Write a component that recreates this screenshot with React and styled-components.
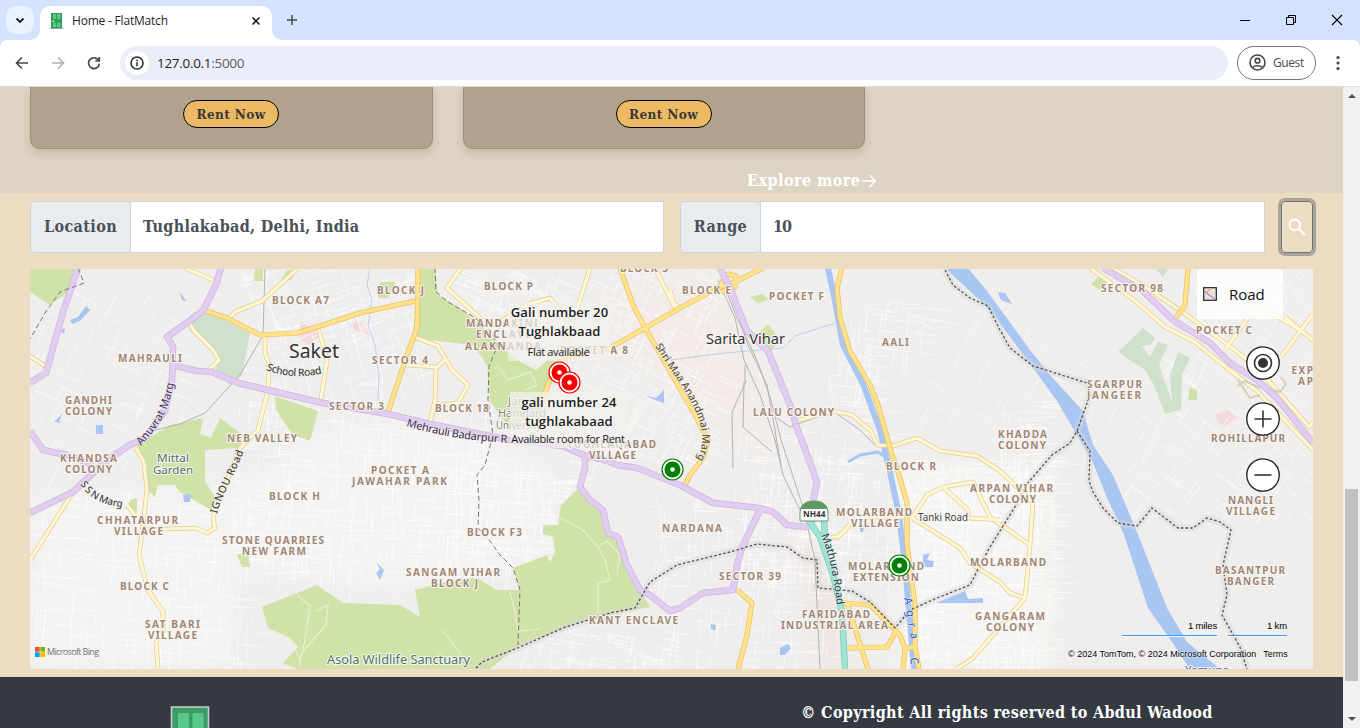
import React from "react";
import styled, { createGlobalStyle, css } from "styled-components";

const ui = '"Open Sans", "Noto Sans", sans-serif';
const display = '"DejaVu Serif Condensed", "DejaVu Serif", serif';

const Global = createGlobalStyle`
  * { box-sizing: border-box; }
  html, body { margin: 0; height: 100%; overflow: hidden; }
  body { font-family: ${ui}; }
  svg { display: block; }
`;

const Window = styled.div`
  width: 1360px;
  height: 728px;
  display: flex;
  flex-direction: column;
  overflow: hidden;
  background: #d3e3fd;
`;

/* ---------- browser chrome ---------- */
const TabStrip = styled.div`
  height: 40px;
  flex: none;
  display: flex;
  align-items: flex-end;
  padding-left: 6px;
`;
const TabSearch = styled.div`
  width: 28px;
  height: 28px;
  margin: 0 6px 6px 0;
  border-radius: 10px;
  background: #eaf1fe;
  display: grid;
  place-items: center;
`;
const Tab = styled.div`
  position: relative;
  width: 232px;
  height: 34px;
  padding: 0 9px 5px;
  border-radius: 10px 10px 0 0;
  background: #fff;
  display: flex;
  align-items: center;
  font-size: 12px;
  letter-spacing: -0.2px;
  color: #1f1f1f;
  &::before, &::after {
    content: "";
    position: absolute;
    bottom: 0;
    width: 10px;
    height: 10px;
  }
  &::before { left: -10px; background: radial-gradient(circle at 0 0, transparent 9.5px, #fff 10px); }
  &::after { right: -10px; background: radial-gradient(circle at 100% 0, transparent 9.5px, #fff 10px); }
`;
const TabTitle = styled.span`
  flex: 1;
  margin-left: 8px;
`;
const NewTab = styled.div`
  align-self: center;
  margin-left: 14px;
`;
const WindowButtons = styled.div`
  margin-left: auto;
  align-self: center;
  display: flex;
  gap: 34px;
  padding-right: 17px;
`;
const Toolbar = styled.div`
  height: 47px;
  flex: none;
  display: flex;
  align-items: center;
  padding: 0 15px 1px 15px;
  background: #fff;
  border-radius: 8px 8px 0 0;
  border-bottom: 1px solid #dadcdc;
`;
const NavIcons = styled.div`
  display: flex;
  gap: 22px;
  margin-right: 19px;
`;
const Address = styled.div`
  width: 1108px;
  height: 34px;
  padding-left: 5px;
  border-radius: 17px;
  background: #ebeef8;
  display: flex;
  align-items: center;
  gap: 8px;
  font-size: 13.5px;
  letter-spacing: -0.3px;
  color: #1f1f1f;
  span span { color: #5c5e62; }
`;
const SiteInfo = styled.div`
  width: 24px;
  height: 24px;
  border-radius: 50%;
  background: #fff;
  display: grid;
  place-items: center;
`;
const Profile = styled.div`
  width: 79px;
  height: 34px;
  margin: 0 15px 0 9px;
  border: 1px solid #74777a;
  border-radius: 17px;
  display: flex;
  align-items: center;
  padding-left: 11px;
  gap: 7px;
  font-size: 12px;
  letter-spacing: -0.4px;
  color: #474747;
`;

/* ---------- page ---------- */
const Viewport = styled.div`
  flex: 1;
  min-height: 0;
  display: flex;
`;
const Page = styled.main`
  width: 1343px;
  background: #ecdcc1;
  display: flex;
  flex-direction: column;
  font-family: ${display};
`;
const Listings = styled.section`
  height: 106px;
  flex: none;
  background: #ddd4c3;
  display: flex;
  flex-direction: column;
`;
const CardRow = styled.div`
  display: flex;
  gap: 30px;
  padding-left: 30px;
`;
const Card = styled.article`
  width: ${(p) => p.$w}px;
  height: 62px;
  padding: 13px 1px 0 0;
  display: flex;
  justify-content: center;
  align-items: flex-start;
  background: #b1a28e;
  border: 1px solid #9d8e7c;
  border-top: 0;
  border-radius: 0 0 10px 10px;
  box-shadow: 0 4px 8px rgba(90, 70, 40, 0.2);
`;
const RentButton = styled.button`
  width: 96px;
  height: 28px;
  padding: 0 0 1px;
  border: 1px solid #000;
  border-radius: 14px;
  background: #ecb964;
  color: #3a3835;
  font: bold 13.5px ${display};
  letter-spacing: 0.35px;
  white-space: nowrap;
`;
const Explore = styled.a`
  align-self: flex-start;
  margin: 20px 0 0 747px;
  display: flex;
  align-items: center;
  color: #fff;
  font-weight: bold;
  font-size: 16px;
  line-height: 24px;
  letter-spacing: ${(p) => p.$spacing}px;
`;
const SearchBar = styled.form`
  display: flex;
  gap: 16px;
  height: 52px;
  margin: 8px 30px 16px;
`;
const InputGroup = styled.div`
  width: ${(p) => p.$w}px;
  display: flex;
  color: #495057;
  font-weight: bold;
  font-size: 16px;
`;
const GroupLabel = styled.span`
  width: ${(p) => p.$w}px;
  padding-bottom: 2px;
  border: 1px solid #ced4da;
  border-radius: 4px;
  background: #e9ecef;
  display: grid;
  place-items: center;
  letter-spacing: ${(p) => p.$spacing}px;
`;
const Field = styled.span`
  flex: 1;
  margin-left: -1px;
  padding: 0 0 2px 12px;
  border: 1px solid #ced4da;
  background: #fff;
  display: flex;
  align-items: center;
  letter-spacing: ${(p) => p.$spacing}px;
`;
const SearchButton = styled.button`
  width: 32px;
  height: 52px;
  padding: 0;
  border: 1px solid #6c757d;
  border-radius: 4px;
  background: transparent;
  box-shadow: 0 0 0 3px #aba597;
  display: grid;
  place-items: center;
`;
const Footer = styled.footer`
  flex: 1;
  margin-top: 8px;
  background: #353941;
  display: flex;
  align-items: flex-start;
`;
const FooterLogo = styled.div`
  margin: 29px 0 0 170px;
`;
const Copyright = styled.p`
  margin: 24px 0 0 591px;
  color: #fff;
  font-weight: bold;
  font-size: 16px;
  line-height: 24px;
  white-space: nowrap;
  letter-spacing: 0.34px;
`;
const Scrollbar = styled.div`
  width: 17px;
  background: #f1f1f1;
  display: flex;
  flex-direction: column;
  align-items: center;
`;
const Thumb = styled.div`
  width: 13px;
  height: 192px;
  margin-top: 388px;
  margin-bottom: auto;
  background: #c1c1c1;
`;
const Arrow = styled.div`
  width: 0;
  height: 0;
  flex: none;
  border: 4px solid transparent;
  ${(p) =>
    p.$down
      ? css`border-top-color: #505050; border-bottom: 0; margin-bottom: 7px;`
      : css`border-bottom-color: #505050; border-top: 0; margin-top: 7px; margin-bottom: 3px;`}
`;

/* ---------- map ---------- */
const MapFrame = styled.section`
  position: relative;
  width: 1283px;
  height: 400px;
  flex: none;
  margin-left: 30px;
  overflow: hidden;
  font-family: ${ui};
`;
const MapType = styled.div`
  position: absolute;
  left: 1167px;
  top: 0;
  width: 86px;
  height: 50px;
  padding-left: 6px;
  display: flex;
  align-items: center;
  gap: 12px;
  background: rgba(255, 255, 255, 0.8);
  font-size: 15px;
  color: #111;
`;
const Controls = styled.div`
  position: absolute;
  left: 1216px;
  top: 77px;
  display: flex;
  flex-direction: column;
  gap: 22px;
`;
const PinPanel = styled.div`
  position: absolute;
  left: ${(p) => p.$x}px;
  top: ${(p) => p.$y}px;
  width: ${(p) => p.$w}px;
  height: ${(p) => p.$h}px;
  background: rgba(242, 241, 238, 0.7);
  color: #1a1a1a;
  text-align: center;
  white-space: nowrap;
`;
const PinTitle = styled.div`
  padding-top: 1px;
  font-size: 13px;
  font-weight: 600;
  line-height: 19px;
  letter-spacing: 0.1px;
  text-shadow: 0 0 2px #fff;
`;
const PinNote = styled.div`
  margin: ${(p) => p.$gap}px 0 0 -2px;
  font-size: 11px;
  line-height: 16px;
  letter-spacing: -0.33px;
`;
const Pin = styled.div`
  position: absolute;
  left: ${(p) => p.$x - 11.5}px;
  top: ${(p) => p.$y - 11.5}px;
`;
const Scale = styled.div`
  position: absolute;
  left: 1092px;
  top: 350px;
  display: flex;
  gap: 11px;
  font: 9.5px/13px "Liberation Sans", sans-serif;
  letter-spacing: -0.15px;
  color: #000;
`;
const ScaleBar = styled.div`
  width: ${(p) => p.$w}px;
  height: 17px;
  border-bottom: 1px solid #4598f5;
  box-shadow: 0 1px #fff;
  text-align: right;
  white-space: nowrap;
`;
const MapCredits = styled.div`
  position: absolute;
  left: 1038px;
  top: 379px;
  display: flex;
  gap: 7px;
  font: 9px/12px "Liberation Sans", sans-serif;
  color: #000;
  text-shadow: 0 0 2px #fff, 0 0 1px #fff;
  white-space: nowrap;
`;
const BingMark = styled.div`
  position: absolute;
  left: 5px;
  top: 376px;
  display: flex;
  align-items: center;
  gap: 2px;
  font-size: 9px;
  letter-spacing: -0.65px;
  color: #737373;
  white-space: nowrap;
`;

/* x, baseline, width, text */
const AREAS = [
  [272, 304, 57, "BLOCK A7"], [377, 294, 47, "BLOCK J"], [484, 290, 49, "BLOCK P"],
  [466, 327, 72, "MANDAKINI"], [476, 338, 55, "ENCLAVE"], [465, 350, 76, "ALAKNANDA"],
  [372, 364, 56, "SECTOR 4"], [329, 410, 55, "SECTOR 3"], [435, 412, 54, "BLOCK 18"],
  [118, 362, 64, "MAHRAULI"], [65, 404, 47, "GANDHI"], [65, 415, 47, "COLONY"],
  [60, 462, 57, "KHANDSA"], [65, 473, 47, "COLONY"], [227, 442, 70, "NEB VALLEY"],
  [371, 474, 58, "POCKET A"], [352, 485, 95, "JAWAHAR PARK"], [269, 500, 51, "BLOCK H"],
  [97, 524, 81, "CHHATARPUR"], [114, 535, 49, "VILLAGE"], [222, 544, 102, "STONE QUARRIES"],
  [242, 555, 64, "NEW FARM"], [120, 590, 49, "BLOCK C"], [145, 628, 55, "SAT BARI"],
  [148, 639, 49, "VILLAGE"], [467, 536, 55, "BLOCK F3"], [406, 576, 94, "SANGAM VIHAR"],
  [431, 587, 47, "BLOCK J"], [589, 624, 89, "KANT ENCLAVE"], [662, 532, 60, "NARDANA"],
  [719, 580, 62, "SECTOR 39"], [753, 416, 81, "LALU COLONY"], [682, 294, 49, "BLOCK E"],
  [769, 300, 55, "POCKET F"], [882, 346, 27, "AALI"], [886, 470, 50, "BLOCK R"],
  [836, 516, 76, "MOLARBAND"], [851, 527, 48, "VILLAGE"], [848, 570, 76, "MOLARBAND"],
  [853, 581, 66, "EXTENSION"], [802, 618, 68, "FARIDABAD"], [781, 629, 107, "INDUSTRIAL AREA"],
  [970, 492, 83, "ARPAN VIHAR"], [989, 503, 47, "COLONY"], [998, 438, 49, "KHADDA"],
  [998, 449, 48, "COLONY"], [970, 566, 76, "MOLARBAND"], [975, 620, 70, "GANGARAM"],
  [986, 631, 48, "COLONY"], [1087, 388, 55, "SGARPUR"], [1087, 399, 54, "JANGEER"],
  [1101, 292, 62, "SECTOR 98"], [1196, 334, 56, "POCKET C"], [1291.5, 374, 21.5, "EXP"],
  [1298, 385, 15, "AP"], [1211, 442, 74, "ROHILLAPUR"], [1228, 504, 45, "NANGLI"],
  [1226, 515, 49, "VILLAGE"], [1215, 574, 70, "BASANTPUR"], [1227, 585, 47, "BANGER"],
  [620, 272, 48, "BLOCK 5"], [560, 354, 68, "POCKET A 8"], [567, 448, 89, "TUGHLAQABAD"],
  [589, 459, 47, "VILLAGE"],
];

/* x, baseline, width, size, colour, text */
const PLACES = [
  [289, 358, 50, 20, "#333", "Saket"], [706, 344, 79, 15, "#333", "Sarita Vihar"],
  [157, 462, 32, 11, "#4f6f62", "Mittal"], [153, 474, 40, 11, "#4f6f62", "Garden"],
  [327, 664, 143, 12, "#4d7561", "Asola Wildlife Sanctuary"],
  [918, 520.5, 50, 10.5, "#444", "Tanki Road"], [508, 405, 30, 10.5, "#8a8377", "Jamia"],
  [498, 417, 48, 10.5, "#8a8377", "Hamdard"], [496, 429, 45, 10.5, "#8a8377", "University"],
  [1185, 674, 44, 11, "#315fc4", "Yamuna"],
];

/* id, path, size, colour, length, text */
const ROAD_NAMES = [
  ["anuvrat", "M141 446 C156 430 170 412 174 381", 11, "#4e3f63", 72, "Anuvrat Marg"],
  ["ignou", "M217 514 C222 494 234 478 244 450", 10.5, "#444", 68, "IGNOU Road"],
  ["ssn", "M80 484 C90 500 104 505 127 508", 10, "#444", 50, "S S N Marg"],
  ["school", "M266 370 C284 377 303 378 325 373", 10.5, "#444", 57, "School Road"],
  ["mehrauli", "M406 426 C440 436 470 441 511 443", 11, "#4e3f63", 103, "Mehrauli Badarpur R"],
  ["shri", "M655 346 C676 382 719 425 695 462", 10.5, "#5d5434", 127, "Shri Maa Anandmai Marg"],
  ["mathura", "M821 535 C831 560 834 582 837 607", 11, "#254e55", 72, "Mathura Road"],
  ["agra", "M904 598 L911 640", 11, "#315fc4", 42, "Agra"],
  ["canal", "M910 658 L912 672", 11, "#315fc4", 9, "C"],
];

const PURPLE = [
  "M78 268L63 312L46 373L30 383",
  "M221 268L216 285L203 311L167 337L173 346L172 380L165 411L145 438L130 445L110 458L93 473L73 492L30 513",
  "M30 431L43 450L67 455L93 465",
  "M173 365L197 371L212 372L238 383L323 403L388 414L430 424L510 440L563 446L583 455L605 460L617 465L637 468L680 485L713 503L760 508L773 512L787 525L807 527L817 515",
  "M585 455L585 468L580 487L590 500L603 510L608 533L618 537L627 565L640 590L650 595L670 611L680 608L703 593L733 590L737 565L742 547L760 510",
  "M720 268L730 288L747 331L768 351L790 405L797 428L812 468L817 482L813 502",
  "M1103 268L1143 291L1173 320L1210 343L1230 363L1257 380L1277 398L1313 443",
];
const ORANGE = [
  "M203 310L227 318L260 335L297 333L320 326L360 313L415 301",
  "M418 268L417 328L407 355L388 412",
  "M620 268L633 305L645 328L655 345L675 380L695 415L708 440L703 458L690 475L684 487",
  "M543 398L553 372L563 358L610 348L645 328L680 308L718 288L737 281L763 268",
  "M718 288L728 274L736 276L735 287L721 292",
  "M842 268L837 288L840 318L850 351L870 385L878 405L890 448L898 472L907 502L907 545L915 605L915 647L919 669",
  "M737 590L752 603L747 635L738 669",
  "M843 603L870 605L900 635L905 648L903 669M847 603L868 669M905 648L916 647M897 630L887 647L847 648",
  "M1188 268L1185 305L1176 317",
];
const YELLOW = [
  "M188 320L194 331L213 350L219 360L210 369",
  "M185 268L213 280M298 268L262 301L235 312L229 319",
  "M265 336L265 352L269 366L268 390L258 430L240 448L219 500L213 518L215 528L207 533L196 528L165 529L141 529",
  "M318 327L327 360L321 399M30 356L45 366",
  "M136 448L144 462L147 490L143 525L139 555L148 590L163 612L163 632L156 642L158 669",
  "M73 492L30 560M127 505L135 515",
  "M461 268L447 288L480 318L495 325L528 304L550 298L560 310M590 268L565 347",
  "M414 337L438 346L452 370L468 385L458 403L433 406M407 365L436 367L435 400L430 423M447 358L437 367",
  "M800 420L833 411L852 415L870 430L878 445L893 446L917 438L940 451L977 456L1000 471L1033 502L1030 545L1025 598L993 635L973 658L957 669",
  "M912 518L927 495L943 487L973 482L990 517L1030 545M943 487L968 510L968 518L1000 520M912 518L960 548L970 563L1000 582L1010 593L1025 598M907 517L865 517",
  "M1090 268L1134 300L1165 327L1195 342L1227 368L1257 391L1313 450",
  "M1108 265L1150 290L1188 316L1235 350L1260 371L1309 427L1313 422",
  "M1225 350L1257 305L1300 330L1313 340M1281 357L1313 314M1300 330L1285 317",
  "M830 537L838 537L850 525M670 300L680 308M655 268L676 310M670 290L675 309",
];
const PARKS = [
  "M30 268H76L68 292L50 305L30 292Z",
  "M137 445L170 425L203 418L200 434L211 438L220 418L243 435L240 448L205 450L205 481L216 499L211 510L180 492L175 485L158 485L155 497L145 488L147 465Z",
  "M275 396L318 411L310 441L293 435L276 410Z",
  "M418 268H435L438 295L460 308L487 331L505 350L519 361L536 370L548 360L560 359L552 380L542 400L540 428L508 426L490 401L487 365L473 345L430 340L413 335Z",
  "M262 607L317 585L343 603L400 605L420 617L415 590L460 578L477 578L497 590H520L513 568L547 555L550 562L555 552L553 537L543 534V525H558L561 505L580 487L603 510L608 533L618 537L627 565L640 590L650 607L590 618L517 647L490 669H297L283 663L298 647L290 638L268 628Z",
  "M255 268H263V281H254ZM287 270H296L291 280H281ZM380 282H396L388 298H378ZM752 340L768 324L780 340L770 352Z",
  "M750 297L762 294L769 299L758 303ZM130 500L137 498L137 512L126 509ZM237 555L248 553L250 567H242ZM1091 284L1100 275L1108 282L1100 290ZM1190 387L1197 390V400H1188Z",
];
const PALE_PARKS = [
  "M187 323L205 310L250 333L242 375L230 385L215 372L219 360L207 344L190 331Z",
  "M1143 328L1155 338L1150 345L1142 346L1150 357L1158 342L1168 345L1159 365L1172 402L1170 375L1178 352L1190 358L1182 375L1181 410L1165 414L1154 385L1145 370L1118 352Z",
  "M1155 268H1169L1163 277Z",
];
const WATER = [
  "M945 268H968L987 291L1030 350L1050 375L1083 411L1093 445L1113 475L1137 532L1167 608L1187 642L1220 669H1190L1172 642L1148 608L1123 532L1107 498L1094 465L1077 435L1057 401L1033 368L990 310Z",
  "M70 320L78 317L86 306L90 310L80 321L72 324ZM60 330L65 328L64 334ZM96 425H103V434H96ZM54 422L63 413L59 421L62 423ZM179 291L187 302L182 300ZM183 495L191 494L190 502H184Z",
  "M376 562L384 570L380 580L376 573L380 569ZM646 396L656 398L664 390L664 403L655 400ZM780 648L788 644L791 648L785 655H780ZM998 292L1005 293L1012 304L1001 300ZM936 603L965 591L968 599L983 598V603ZM923 555L930 553L927 560L934 561L933 567H923ZM711 624L716 625L715 631L711 629ZM860 527L864 528L863 532H860Z",
];
const BOUNDARIES = [
  "M945 270L953 285L970 298L988 306L1000 330L1010 348L1033 366L1087 383L1090 395L1077 431L1070 443L1052 455L1027 484L1018 502L990 547L980 565L970 585L937 598L910 610L895 628L870 602L852 591L818 588L817 560L803 558L787 547L757 544L730 552L677 565L650 582L635 608L610 613L563 628L520 647L482 662L475 669",
  "M1077 431L1090 451L1089 481L1093 492L1103 508L1118 523L1137 526L1152 508L1178 528H1193L1207 518L1220 522L1231 530L1223 565L1227 595L1222 615L1240 647L1247 669",
];
const DASHES = [
  "M78 268L84 283L60 292L45 313L30 339",
  "M435 268L436 292L448 302L472 316L485 326L493 335L498 345L489 366L488 400L493 435L485 465L477 475L479 500L478 528L490 541L500 555L513 568L520 590L518 645",
];
const RAILS = [
  "M265 268L263 335L240 375L205 413L180 424L155 430L130 445",
  "M718 280L735 318L744 360L760 395L775 440L783 475L800 510M722 280L737 318L757 360L771 400L781 440L804 510L815 560L820 669M727 280L748 345L767 385L781 465M746 381L732 412L733 468M744 382L743 427L772 452M745 365V382M777 418L790 427L833 411L860 430L875 445",
];

/* Fine street mesh: deterministic short segments inside the built-up areas. */
function streetMesh() {
  let seed = 71;
  const rnd = () => {
    seed = (seed * 16807) % 2147483647;
    return seed / 2147483647;
  };
  const zones = [
    [30, 490, 230, 178, 260, 0.05], [230, 400, 260, 180, 420, 0.02], [240, 270, 180, 120, 190, -0.3],
    [440, 460, 130, 110, 220, 0.1], [580, 270, 140, 190, 260, 0.45], [650, 490, 200, 178, 190, 0.05],
    [740, 430, 160, 150, 220, 0.08], [905, 460, 150, 205, 420, 0.03], [1130, 400, 180, 120, 120, 0.6],
    [1180, 270, 133, 120, 110, 0.7], [440, 270, 130, 60, 110, 0.4], [850, 300, 80, 60, 50, 0.1],
    [830, 350, 50, 70, 60, 0.1], [520, 630, 160, 38, 80, 0.2], [30, 290, 160, 180, 80, 0.4],
    [1000, 400, 50, 80, 70, 0], [900, 270, 400, 150, 50, 0.5],
  ];
  let d = "";
  zones.forEach(([x, y, w, h, n, tilt]) => {
    for (let i = 0; i < n; i++) {
      const a = tilt + (rnd() - 0.5) * 0.12 + (rnd() > 0.5 ? Math.PI / 2 : 0);
      const len = 6 + rnd() * 24;
      const sx = x + rnd() * w;
      const sy = y + rnd() * h;
      d += `M${sx.toFixed(1)} ${sy.toFixed(1)}l${(Math.cos(a) * len).toFixed(1)} ${(Math.sin(a) * len).toFixed(1)}`;
    }
  });
  return d;
}
const STREETS = streetMesh();

const Road = ({ paths, edge, fill, width }) => (
  <g fill="none" strokeLinejoin="round">
    <path d={paths.join("")} stroke={edge} strokeWidth={width + 1.4} />
    <path d={paths.join("")} stroke={fill} strokeWidth={width} />
  </g>
);

const MapDrawing = () => (
  <svg width="1283" height="400" viewBox="30 269 1283 400">
    <defs>
      <filter id="soft" x="-20%" y="-20%" width="140%" height="140%"><feGaussianBlur stdDeviation="10" /></filter>
      {ROAD_NAMES.map(([id, d]) => <path key={id} id={id} d={d} />)}
    </defs>
    <rect x="30" y="269" width="1283" height="400" fill="#efeeec" />
    <g filter="url(#soft)">
      <path d="M30 500L240 480L350 420L480 430L560 480L540 560L400 590L240 570L230 669H30Z" fill="#f4f3f1" />
      <path d="M900 460L1050 470L1050 669H900Z" fill="#f5f4f2" />
      <path d="M590 300L720 280L780 460L750 440L690 400L620 330Z" fill="#f3ebe9" />
      <path d="M800 520L840 590L845 669H820Z" fill="#efe4e2" />
    </g>
    <path d="M300 320L320 335L310 345L300 340ZM350 324L362 320L370 335L354 330ZM1215 415L1228 410L1237 418L1222 428Z" fill="#f3d9da" />
    <path d={STREETS} stroke="#fff" strokeWidth="0.9" opacity="0.65" fill="none" />
    <path d={PARKS.join("")} fill="#d0e2a8" />
    <path d={PALE_PARKS.join("")} fill="#cfe1cb" />
    <path d="M290 638L300 660M297 595L310 606L304 645L299 666M317 611L328 605L326 625L300 655M560 518L583 530L598 547L605 560L610 580L598 583V613M598 547L607 541L620 555L617 575M510 592L515 612L518 631L540 629M442 630L462 655M497 365L508 380L530 372L537 385L525 390" stroke="#e8f0cf" strokeWidth="1.2" fill="none" />
    <path d={WATER.join("")} fill="#a9c6f3" />
    <path d="M828 268L835 301L843 345L863 384L880 430L890 472L899 515L905 565L908 600L914 669" fill="none" stroke="#a9c6f3" strokeWidth="6" />
    <path d="M848 462L860 455L878 452L888 458" fill="none" stroke="#a9c6f3" strokeWidth="3" />
    <path d="M370 268L367 285L372 300L368 325L375 345L379 375L378 400M670 360L725 353L783 348L795 336L835 323" fill="none" stroke="#bad0ef" />
    <path d={BOUNDARIES.join("")} fill="none" stroke="#d9d8d6" strokeWidth="7" opacity="0.45" />
    <path d={RAILS.join("")} fill="none" stroke="#b4b2b4" strokeWidth="1" />
    <Road paths={YELLOW} edge="#e2ca94" fill="#fff7cf" width={3.2} />
    <Road paths={ORANGE} edge="#e9bd65" fill="#ffe28a" width={3.8} />
    <path d="M1238 380L1250 398L1260 395M1281 377L1286 384L1280 392L1273 390M1238 386L1245 381L1260 388" stroke="#d4d0bc" strokeWidth="2" fill="none" />
    <Road paths={PURPLE} edge="#cdb4dc" fill="#e1cdf1" width={5.2} />
    <Road paths={["M807 518L820 537L833 575L842 612L845 669M824 518L825 545"]} edge="#7cc9b9" fill="#9ee4d5" width={5} />
    <path d={BOUNDARIES.join("")} fill="none" stroke="#555" strokeWidth="1.3" strokeDasharray="2.6 2" />
    <path d={DASHES.join("")} fill="none" stroke="#777" strokeWidth="1" strokeDasharray="5 3" />
    <g fontFamily='"Noto Sans", "Open Sans", sans-serif' paintOrder="stroke" stroke="#f7f6f4" strokeWidth="2" strokeLinejoin="round">
      {AREAS.map(([x, y, w, t]) => (
        <text key={`${x}-${y}`} x={x} y={y} textLength={w} fontSize="10" fontWeight="700" fill="#a18673">{t}</text>
      ))}
      {PLACES.map(([x, y, w, s, c, t]) => (
        <text key={t} x={x} y={y} textLength={w} lengthAdjust="spacingAndGlyphs" fontSize={s} fill={c}>{t}</text>
      ))}
      {ROAD_NAMES.map(([id, , s, c, len, t]) => (
        <text key={id} fontSize={s} fill={c} strokeWidth="1" fontWeight="500" textLength={len}>
          <textPath href={`#${id}`}>{t}</textPath>
        </text>
      ))}
    </g>
    <path d="M800 512C801 504 806 501 814 501S827 504 828 512V521H800Z" fill="#fff" stroke="#69956a" />
    <path d="M800 511C801 504 806 501 814 501S827 504 828 511Z" fill="#5c9b62" />
    <path d="M801 509H827V520H801Z" fill="#fff" />
    <text x="803" y="517" textLength="22.5" lengthAdjust="spacingAndGlyphs" fontFamily="Noto Sans" fontSize="9.5" fontWeight="700" fill="#333">NH44</text>
  </svg>
);

const PinIcon = ({ color }) => (
  <svg width="23" height="23" viewBox="0 0 23 23">
    <circle cx="11.5" cy="11.5" r="10.5" fill="rgba(255,255,255,.9)" stroke={color} strokeWidth="1.2" />
    <circle cx="11.5" cy="11.5" r="8" fill={color} />
    <circle cx="11.5" cy="11.5" r="2.3" fill="#fff" />
  </svg>
);

const RoundControl = ({ children }) => (
  <svg width="34" height="34" viewBox="0 0 34 34" fill="none" stroke="#333" strokeWidth="1.6">
    <circle cx="17" cy="17" r="16.2" fill="#fff" stroke="#1b1b1b" strokeWidth="1.3" />
    {children}
  </svg>
);

const Stroke = ({ d, size = 16, w = 1.7, color = "#474747", children }) => (
  <svg width={size} height={size} viewBox={`0 0 ${size} ${size}`} fill="none" stroke={color} strokeWidth={w}>
    <path d={d} />
    {children}
  </svg>
);

const DoorSmall = () => (
  <svg width="15" height="16" viewBox="0 0 15 16">
    <path d="M0 15.5H15" stroke="#c7c7c7" />
    <path d="M2 0H13V15.5H2Z" fill="#2f9b5e" />
    <path d="M4 1H7V6H4ZM8 1H11.5V6H8ZM4 9.5H7V14H4ZM8 9.5H11.5V14H8Z" fill="#57c98b" />
    <path d="M3 7.5H5.2V9H3Z" fill="#f5d93c" />
  </svg>
);

const DoorLarge = () => (
  <svg width="40" height="24" viewBox="0 0 40 24">
    <path d="M1.5 24V1H38.5V24" fill="#3d9b67" stroke="#c9cccb" strokeWidth="1.6" />
    <path d="M8 7H19V24H8ZM22.5 7H33.5V24H22.5Z" fill="#57c98b" />
  </svg>
);

export default function App() {
  return (
    <Window>
      <Global />
      <TabStrip>
        <TabSearch><Stroke size={10} d="M1.5 3.5L5 7L8.5 3.5" w={1.8} color="#1f1f1f" /></TabSearch>
        <Tab>
          <DoorSmall />
          <TabTitle>Home - FlatMatch</TabTitle>
          <Stroke size={14} d="M3.5 3.5L10.5 10.5M10.5 3.5L3.5 10.5" w={1.6} color="#222" />
        </Tab>
        <NewTab><Stroke size={12} d="M6 1V11M1 6H11" w={1.5} /></NewTab>
        <WindowButtons>
          <Stroke size={12} d="M1 6.5H11" w={1} color="#000" />
          <Stroke size={12} d="M1.5 3.5H8.5V10.5H1.5ZM3.5 3.5V1.5H10.5V8.5H8.5" w={1} color="#000" />
          <Stroke size={12} d="M1 1L11 11M11 1L1 11" w={1.1} color="#000" />
        </WindowButtons>
      </TabStrip>
      <Toolbar>
        <NavIcons>
          <Stroke size={14} d="M13 7H2M7 1.5L1.5 7L7 12.5" />
          <Stroke size={14} d="M1 7H12M7 1.5L12.5 7L7 12.5" color="#b0b0b0" />
          <Stroke size={14} d="M11.6 4.3A5.4 5.4 0 1 0 12.4 7.7M12.3 1V5H8.3" />
        </NavIcons>
        <Address>
          <SiteInfo>
            <Stroke size={14} d="M7 6.3V10.2M7 3.8V5.2" w={1.6} color="#303030"><circle cx="7" cy="7" r="6" /></Stroke>
          </SiteInfo>
          <span>127.0.0.1<span>:5000</span></span>
        </Address>
        <Profile>
          <svg width="17" height="17" viewBox="0 0 17 17" fill="none" stroke="#474747" strokeWidth="1.6">
            <circle cx="8.5" cy="8.5" r="7.5" />
            <circle cx="8.5" cy="6.7" r="2.3" />
            <path d="M3.5 13.5C5.5 11.2 11.5 11.2 13.5 13.5" />
          </svg>
          Guest
        </Profile>
        <svg width="14" height="16" viewBox="0 0 14 16" fill="#474747">
          <circle cx="7" cy="2.5" r="1.6" /><circle cx="7" cy="8" r="1.6" /><circle cx="7" cy="13.5" r="1.6" />
        </svg>
      </Toolbar>
      <Viewport>
        <Page>
          <Listings>
            <CardRow>
              <Card $w={403}><RentButton>Rent Now</RentButton></Card>
              <Card $w={402}><RentButton>Rent Now</RentButton></Card>
            </CardRow>
            <Explore $spacing={0.45}>
              Explore more
              <Stroke size={18} d="M2 9H15.5M9.5 3L15.5 9L9.5 15" w={1.6} color="#fff" />
            </Explore>
          </Listings>
          <SearchBar>
            <InputGroup $w={634}>
              <GroupLabel $w={101} $spacing={0.4}>Location</GroupLabel>
              <Field $spacing={0.3}>Tughlakabad, Delhi, India</Field>
            </InputGroup>
            <InputGroup $w={585}>
              <GroupLabel $w={81} $spacing={0.4}>Range</GroupLabel>
              <Field $spacing={-1}>10</Field>
            </InputGroup>
            <SearchButton type="button">
              <Stroke size={20} d="M12 12L18 18" w={2.4} color="#fff"><circle cx="7.8" cy="7.8" r="5.4" strokeWidth="2" /></Stroke>
            </SearchButton>
          </SearchBar>
          <MapFrame>
            <MapDrawing />
            <PinPanel $x={478} $y={33} $w={103} $h={59}>
              <PinTitle>Gali number 20<br />Tughlakbaad</PinTitle>
              <PinNote $gap={3}>Flat available</PinNote>
            </PinPanel>
            <PinPanel $x={480} $y={123} $w={118} $h={56}>
              <PinTitle>gali number 24<br />tughlakabaad</PinTitle>
              <PinNote $gap={0}>Available room for Rent</PinNote>
            </PinPanel>
            <Pin $x={529} $y={103}><PinIcon color="#f90000" /></Pin>
            <Pin $x={539} $y={113}><PinIcon color="#f90000" /></Pin>
            <Pin $x={642} $y={200}><PinIcon color="#008000" /></Pin>
            <Pin $x={869} $y={296}><PinIcon color="#008000" /></Pin>
            <MapType>
              <svg width="14" height="14" viewBox="0 0 14 14" fill="none">
                <rect x=".7" y=".7" width="12.6" height="12.6" fill="#e8e2dc" stroke="#222" strokeWidth="1.2" />
                <path d="M1.5 4L6 8L12 12" stroke="#b982d0" strokeWidth="1.5" />
                <path d="M4 5L8 1.5" stroke="#e6b75a" strokeWidth="1.5" />
              </svg>
              Road
            </MapType>
            <Controls>
              <RoundControl><circle cx="17" cy="17" r="8.5" /><circle cx="17" cy="17" r="5" fill="#333" stroke="none" /></RoundControl>
              <RoundControl><path d="M17 8.5V25.5M8.5 17H25.5" /></RoundControl>
              <RoundControl><path d="M8.5 17H25.5" /></RoundControl>
            </Controls>
            <BingMark>
              <svg width="10" height="10" viewBox="0 0 10 10">
                <path d="M0 0H4.7V4.7H0Z" fill="#f25022" /><path d="M5.3 0H10V4.7H5.3Z" fill="#7fba00" />
                <path d="M0 5.3H4.7V10H0Z" fill="#00a4ef" /><path d="M5.3 5.3H10V10H5.3Z" fill="#ffb900" />
              </svg>
              Microsoft Bing
            </BingMark>
            <Scale>
              <ScaleBar $w={95}>1 miles</ScaleBar>
              <ScaleBar $w={59}>1 km</ScaleBar>
            </Scale>
            <MapCredits>
              <span>© 2024 TomTom, © 2024 Microsoft Corporation</span>
              <span>Terms</span>
            </MapCredits>
          </MapFrame>
          <Footer>
            <FooterLogo><DoorLarge /></FooterLogo>
            <Copyright>© Copyright All rights reserved to Abdul Wadood</Copyright>
          </Footer>
        </Page>
        <Scrollbar>
          <Arrow />
          <Thumb />
          <Arrow $down />
        </Scrollbar>
      </Viewport>
    </Window>
  );
}
